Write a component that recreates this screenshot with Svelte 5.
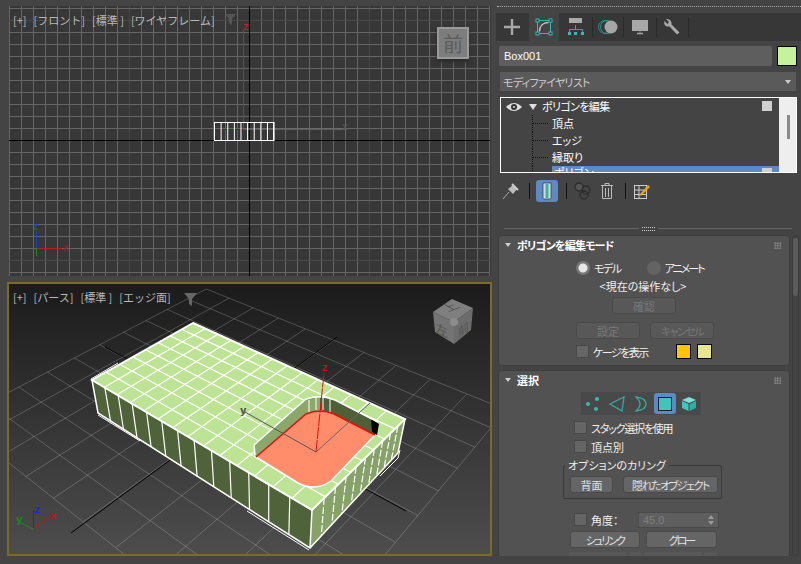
<script>
  const quad = (p) => {
    const [[x0,y0],[x1,y1],[x2,y2],[x3,y3]] = p;
    const dx1=x1-x2, dx2=x3-x2, sx=x0-x1+x2-x3, dy1=y1-y2, dy2=y3-y2, sy=y0-y1+y2-y3;
    const d=dx1*dy2-dx2*dy1;
    const g=(sx*dy2-dx2*sy)/d, h=(dx1*sy-sx*dy1)/d;
    const a=x1-x0+g*x1, b=x3-x0+h*x3, e=y1-y0+g*y1, f=y3-y0+h*y3;
    return (u,v)=>{const w=g*u+h*v+1;return [(a*u+b*v+x0)/w,(e*u+f*v+y0)/w];};
  };
  const seg = (m,a,b,c,d) => { const p=m(a,b), q=m(c,d); return {x1:p[0],y1:p[1],x2:q[0],y2:q[1]}; };
  const range = (n) => Array.from({length:n},(_,i)=>i);

  const B=[193,323], R=[405,419], F=[312,510], L=[92,380];
  const RB=[398,453], FB=[310,548], LB=[98,413];
  const pts = (a) => a.map(p=>p.join(',')).join(' ');
  const top = quad([B,R,F,L]);
  const topGrid = [
    ...range(13).map(i=>seg(top,(i+1)/14,0,(i+1)/14,1)),
    ...range(7).map(i=>seg(top,0,(i+1)/8,1,(i+1)/8))
  ];
  const lf = quad([L,F,FB,LB]);
  const leftLines = range(12).map(i=>seg(lf,(i+1)/13,0,(i+1)/13,1));
  const rf = quad([F,R,RB,FB]);
  const rightLines = range(9).map(i=>seg(rf,(i+1)/10,0,(i+1)/10,1));

  const VA=[-640,-52], VB=[916,-82], O=[230.6,415], k=0.0177;
  const floorP=(u,v)=>{const w=k*u+k*v+1;return [(k*u*VA[0]+k*v*VB[0]+O[0])/w,(k*u*VA[1]+k*v*VB[1]+O[1])/w];};
  const floor=[];
  for(let i=-10;i<=10;i+=2){
    floor.push(seg(floorP,i,-10,i,10));
    floor.push(seg(floorP,-10,i,10,i));
  }

  const vx = range(41).map(i=>9+12*i);
  const hy = range(23).map(i=>8+12*i);
  const boxX = range(10).map(i=>214+i*6.62);
  const tabSeps=[592,623,656,688];
</script>

<div class="root">
  <div class="views">
    <section class="vp front">
      <svg class="canvas" viewBox="9 6 482 270" width="482" height="270">
        {#each vx as x}<line x1={x+.5} y1="6" x2={x+.5} y2="276" class={x===369||x===129?'maj':'gl'}/>{/each}
        {#each hy as y}<line x1="9" y1={y+.5} x2="490" y2={y+.5} class={y===20||y===260?'maj':'gl'}/>{/each}
        <line x1="249.5" y1="6" x2="249.5" y2="276" class="ax"/>
        <line x1="9" y1="140.5" x2="490" y2="140.5" class="ax"/>
        <line x1="243.5" y1="129" x2="345" y2="129" stroke="#6d6d6d" stroke-width="1.5"/>
        <line x1="221" y1="129.5" x2="243" y2="129.5" stroke="#6b1f1f"/>
        <line x1="243.5" y1="30" x2="243.5" y2="128" stroke="#b02c2c"/>
        <rect x="214.5" y="122.5" width="59" height="18" fill="none" stroke="#fff"/>
        {#each boxX as x}<line x1={x+.5} y1="122" x2={x+.5} y2="141" stroke="#fff"/>{/each}
        <text x="243" y="30" class="ax-t" fill="#c22">z</text>
        <text x="342" y="130" class="ax-t" fill="#5a5a5a">x</text>
        <line x1="36.5" y1="248" x2="36.5" y2="231" stroke="#1c3fc0"/>
        <line x1="36" y1="248.5" x2="62" y2="248.5" stroke="#b02020"/>
        <line x1="36.5" y1="248" x2="36.5" y2="256" stroke="#1d8a1d"/>
        <text x="33" y="230" class="ax-t" fill="#2a4fd0">z</text>
        <text x="63" y="251" class="ax-t" fill="#a02020">x</text>
        <path d="M225 14h11l-4 5v6l-3-2v-4z" fill="#555"/>
      </svg>
      <div class="labels mono"><span>[+]</span><span>[フロント]</span><span>[標準 ]</span><span>[ワイヤフレーム]</span></div>
      <div class="cube2d"><span>前</span></div>
    </section>

    <section class="vp persp">
      <svg class="canvas" viewBox="9 284 481 270" width="481" height="270">
        <defs>
          <linearGradient id="bg" x1="0" y1="0" x2="0" y2="1">
            <stop offset="0" stop-color="#1b1b1b"/>
            <stop offset="1" stop-color="#4d4d4d"/>
          </linearGradient>
        </defs>
        <rect x="9" y="284" width="481" height="270" fill="url(#bg)"/>
        {#each floor as l}<line {...l} stroke="#fff" stroke-opacity=".2"/>{/each}
        <line x1="71" y1="533" x2="337" y2="337" stroke="#000"/>
        <line x1="105" y1="347" x2="406" y2="511" stroke="#000"/>

        <polygon points={pts([L,F,FB,LB])} fill="#4f6239"/>
        <polygon points={pts([F,R,RB,FB])} fill="#86a268"/>
        <polygon points={pts([B,R,F,L])} fill="#bde394"/>
        {#each leftLines as l}<line {...l} stroke="#fff" stroke-width="1.2"/>{/each}
        {#each rightLines as l}<line {...l} stroke="#fff" stroke-width="1.2" stroke-dasharray="7 2"/>{/each}
        {#each topGrid as l}<line {...l} stroke="#fff" stroke-width="1.2"/>{/each}

        <path d="M253 445L306 399L320 397L320 410L306 414L256 457Z" fill="#8ba86a"/>
        <path d="M320 397L335 400L378 423L375 435L334 414L320 410Z" fill="#4f6039"/>
        <path d="M371 419L379 424L377 435L372 432Z" fill="#000"/>
        <path d="M309 400V412M316 398V410M323 398V410M330 399V412" stroke="#fff"/>
        <path d="M256 457L306 414Q320 408 334 414L375 435L331 481Q315 492 298 483Z" fill="#ff8c6b"/>
        <path d="M255 455L254 445L306 399Q320 394 335 400L378 422" fill="none" stroke="#fff" stroke-width="1.5"/>
        <path d="M256 457L298 483Q315 492 331 481L375 435" fill="none" stroke="#fff" stroke-width="1.5"/>
        <path d="M256 457L306 414Q320 408 334 414L375 435" fill="none" stroke="#dd1111" stroke-width="1.5"/>

        <polygon points={pts([B,R,F,L])} fill="none" stroke="#fff" stroke-width="2"/>
        <polyline points={pts([L,LB,FB,RB,R])} fill="none" stroke="#fff" stroke-width="1.5"/>
        <line x1="312" y1="510" x2="310" y2="548" stroke="#fff" stroke-width="1.5"/>
        <path d="M91 379L118 363M98 415L140 441M247 511L309 550M380 476L398 458L400 450" fill="none" stroke="#fff"/>

        <line x1="316" y1="452" x2="245" y2="412" stroke="#555"/>
        <line x1="316" y1="452" x2="370" y2="403" stroke="#666"/>
        <line x1="316" y1="452" x2="324" y2="373" stroke="#dd1111" stroke-dasharray="12 1"/>
        <text x="322" y="371" class="ax-t" fill="#dd1111">z</text>
        <text x="240" y="414" class="ax-t bold" fill="#555">y</text>

        <line x1="33.5" y1="529" x2="33.5" y2="510" stroke="#1a22c8"/>
        <line x1="33" y1="529" x2="19" y2="522" stroke="#1b8a1b"/>
        <line x1="33" y1="529" x2="52" y2="515" stroke="#c01818"/>
        <text x="34" y="513" class="ax-t bold" fill="#2028d0">z</text>
        <text x="16" y="523" class="ax-t bold" fill="#1b8a1b">y</text>
        <text x="50" y="519" class="ax-t bold" fill="#a02020">x</text>

        <path d="M184 293h13l-5 6v7l-3-2v-5z" fill="#666"/>

        <polygon points="452,299 473,308 454,322 433,312" fill="#7f7f7f"/>
        <polygon points="433,312 454,322 454,344 435,332" fill="#747474"/>
        <polygon points="454,322 473,308 471,330 454,344" fill="#6c6c6c"/>
        <circle cx="454" cy="322" r="4" fill="#8b8b8b"/>
        <text x="0" y="0" class="cube-t" transform="matrix(.9 -.35 .8 .45 448 312)">上</text>
        <text x="0" y="0" class="cube-t" transform="matrix(.85 .42 0 .9 436 332)">左</text>
        <text x="0" y="0" class="cube-t" transform="matrix(.8 -.55 0 .9 458 338)">前</text>
      </svg>
      <div class="labels mono up"><span>[+]</span><span>[パース]</span><span>[標準 ]</span><span>[エッジ面]</span></div>
    </section>
  </div>

  <aside class="side">
    <div class="grip"></div>
    <nav class="tabs">
      <div class="tab"><svg width="18" height="18" viewBox="0 0 18 18"><path d="M9 1V17M1 9H17" stroke="#a8a8a8" stroke-width="2.4"/></svg></div>
      <div class="tab on"><svg width="18" height="18" viewBox="0 0 18 18" fill="none" stroke="#3fb5b0"><rect x="2.5" y="2.5" width="13" height="13"/><path d="M4.500 13.500C4.500 8 8 4.500 13.500 4.500" stroke="#c8c8c8" stroke-width="1.500"/><rect x="1" y="1" width="3" height="3" fill="#333"/><rect x="14" y="1" width="3" height="3" fill="#333"/><rect x="1" y="14" width="3" height="3" fill="#333"/><rect x="14" y="14" width="3" height="3" fill="#333"/></svg></div>
      <div class="tab"><svg width="18" height="18" viewBox="0 0 18 18"><rect x="2" y="0" width="13" height="5" fill="#aaa"/><path d="M8.5 7V11M2.5 15V11.5H15.500V15" fill="none" stroke="#2fa5a0"/><rect x="1" y="14" width="3" height="3" fill="#3fb5b0"/><rect x="14" y="14" width="3" height="3" fill="#3fb5b0"/><rect x="7" y="14" width="3" height="3" fill="#3fb5b0"/></svg></div>
      <div class="tab"><svg width="20" height="16" viewBox="0 0 20 16"><circle cx="7" cy="8" r="6.5" fill="none" stroke="#2f8f8c"/><circle cx="9" cy="8" r="6.500" fill="none" stroke="#2f8f8c"/><circle cx="13" cy="8" r="6.500" fill="#a6a6a6"/></svg></div>
      <div class="tab"><svg width="18" height="16" viewBox="0 0 18 16"><rect x="1" y="1" width="16" height="11" fill="#a8a8a8"/><path d="M6 14.500H12" stroke="#a8a8a8" stroke-width="1.500"/><path d="M9 12V14" stroke="#777"/></svg></div>
      <div class="tab"><svg width="18" height="18" viewBox="0 0 18 18"><path d="M3 1L6 4L4.500 6L1.500 3C0.500 6 2 8.500 5 8.500L6.500 8.500L14 16.500L16.500 14.500L8.500 6.500C9 3 6.500 .5 3 1Z" fill="#a8a8a8"/></svg></div>
      {#each tabSeps as x}<i class="tsep" style:left="{x-496}px"></i>{/each}
    </nav>
    <div class="namerow">
      <div class="name">Box001</div>
      <div class="swatch"></div>
    </div>
    <div class="drop"><span>モディファイヤリスト</span><i class="tri small"></i></div>
    <div class="stack">
      <div class="rows">
        <div class="row head">
          <svg width="16" height="10" viewBox="0 0 16 10"><path d="M0 5Q8 -3 16 5Q8 13 0 5Z" fill="#ddd"/><circle cx="8" cy="5" r="3" fill="#333"/><circle cx="8" cy="5" r="1" fill="#ddd"/></svg>
          <i class="tri"></i>
          <span>ポリゴンを編集</span>
          <b class="box"></b>
        </div>
        <div class="row sub"><i class="tree"></i><span>頂点</span></div>
        <div class="row sub"><i class="tree"></i><span>エッジ</span></div>
        <div class="row sub"><i class="tree"></i><span>縁取り</span></div>
        <div class="row sub sel"><i class="tree"></i><div class="fill">ポリゴン<b class="box"></b></div></div>
      </div>
      <div class="sb"><i></i></div>
    </div>
    <div class="tools">
      <div class="ti"><svg width="18" height="18" viewBox="0 0 18 18"><path d="M1 17L7 10" stroke="#aaa"/><path d="M6 7L11 3L15 7L11 12Z" fill="#bbb"/><path d="M10 2L16 8" stroke="#ccc" stroke-width="2"/></svg></div>
      <i class="vs"></i>
      <div class="ti act"><svg width="10" height="18" viewBox="0 0 10 18"><path d="M1 1H9V16Q9 17 8 17H2Q1 17 1 16Z" fill="#d8d8d8" stroke="#333" stroke-width=".7"/><rect x="3.500" y="2" width="3" height="14" fill="#33b5ae"/></svg></div>
      <i class="vs"></i>
      <div class="ti"><svg width="18" height="18" viewBox="0 0 18 18" fill="none" stroke="#2c2c2c" stroke-width="1.300"><circle cx="5" cy="5" r="4" fill="#555"/><circle cx="12" cy="8" r="4"/><circle cx="10" cy="13" r="4"/></svg></div>
      <div class="ti"><svg width="14" height="18" viewBox="0 0 14 18" fill="none" stroke="#bbb"><path d="M1 3.500H13M5 3V1.500H9V3"/><path d="M2.500 4V16.500H11.500V4M5.500 6V15M8.500 6V15"/></svg></div>
      <i class="vs"></i>
      <div class="ti"><svg width="18" height="18" viewBox="0 0 18 18"><rect x="1.500" y="3.500" width="12" height="13" fill="#444" stroke="#ccc"/><path d="M1.500 8H13.500M1.500 12.500H13.500M6 3.500V16.500" stroke="#ccc"/><path d="M7 12L15 3L17 5L9 13L6.500 14Z" fill="#eda20e"/></svg></div>
    </div>
    <div class="divider"><i></i><b></b><i></i></div>

    <div class="rollarea">
      <div class="rolls">
        <section class="roll r1">
          <header><i class="tri small"></i><strong class="hd">ポリゴンを編集モード</strong><em></em></header>
          <div class="radios">
            <div class="lab"><i class="radio on"></i><span class="tight">モデル</span></div>
            <div class="lab"><i class="radio"></i><span class="tighter">アニメート</span></div>
          </div>
          <div class="status">&lt;現在の操作なし&gt;</div>
          <div class="btnc"><button class="btn off w63">確認</button></div>
          <div class="btnr"><button class="btn off w63">設定</button><button class="btn off w63"><span class="tight">キャンセル</span></button></div>
          <div class="cage">
            <div class="lab"><i class="check"></i><span class="tight">ケージを表示</span></div>
            <i class="sw y"></i><i class="sw g"></i>
          </div>
        </section>

        <section class="roll r2">
          <header><i class="tri small"></i><strong>選択</strong><em></em></header>
          <div class="subs">
            <div class="si"><svg width="18" height="16" viewBox="0 0 18 16" fill="#36bab3"><circle cx="4" cy="8" r="2"/><circle cx="13" cy="3" r="2"/><circle cx="12" cy="13" r="2"/></svg></div>
            <div class="si"><svg width="16" height="16" viewBox="0 0 16 16" fill="none" stroke="#36a8a2" stroke-width="1.300"><path d="M1 8L15 1L13 15Z"/></svg></div>
            <div class="si"><svg width="12" height="16" viewBox="0 0 12 16" fill="none" stroke="#36a8a2" stroke-width="1.300"><path d="M1 1Q11 2 11 8Q11 14 1 15Q5 11 5 8Q5 5 1 1Z"/></svg></div>
            <div class="si act"><svg width="14" height="14" viewBox="0 0 14 14"><rect x=".5" y=".5" width="13" height="13" fill="#40c5be" stroke="#222"/></svg></div>
            <div class="si"><svg width="16" height="16" viewBox="0 0 16 16"><path d="M8 1L15 4L8 7L1 4Z" fill="#7fe0da"/><path d="M1 5L7.500 8V15L1 12Z" fill="#40c5be"/><path d="M15 5L8.500 8V15L15 12Z" fill="#34aaa4"/></svg></div>
          </div>
          <div class="lab ck first"><i class="check"></i><span class="snug">スタック選択を使用</span></div>
          <div class="lab ck second"><i class="check"></i>頂点別</div>
          <div class="group">
            <span class="legend">オプションのカリング</span>
            <button class="btn w42">背面</button>
            <button class="btn w95"><span class="tight">隠れたオブジェクト</span></button>
          </div>
          <div class="angle">
            <div class="lab"><i class="check"></i>角度：</div>
            <div class="spin"><span>45.0</span><svg width="6" height="10" viewBox="0 0 6 10" fill="#999"><path d="M3 0L6 4H0ZM3 10L0 6H6Z"/></svg></div>
          </div>
          <div class="shr">
            <button class="btn w70"><span class="tighter">シュリンク</span></button>
            <button class="btn w71"><span class="tighter">グロー</span></button>
          </div>
          <div class="nextr"><i></i><i class="s"></i><i></i><i class="s"></i></div>
        </section>
      </div>
      <div class="vbar"><i></i></div>
    </div>
  </aside>
  <div class="foot"></div>
</div>

<style>
  :global(body){margin:0;background:#444;}
  .root{position:relative;width:801px;height:564px;overflow:hidden;background:#444;display:flex;font-family:"Noto Sans CJK JP","Noto Sans",sans-serif;font-size:11px;color:#eee;font-feature-settings:"palt";}
  .views{width:497px;flex:none;padding:6px 0 0 7px;box-sizing:border-box;}
  .vp{position:relative;overflow:hidden;}
  .front{width:482px;height:270px;margin-left:2px;background:#373737;}
  .persp{width:481px;height:270px;margin-top:6px;border:2px solid #7d6a2b;background:#222;}
  .canvas{display:block;}
  .gl{stroke:#666;}
  .maj{stroke:#484848;}
  .ax{stroke:#000;}
  .ax-t{font:10px "DejaVu Sans",sans-serif;}
  .bold{font-weight:700;}
  .cube-t{font-size:14px;fill:#555;}
  .labels{position:absolute;left:4px;top:6px;display:flex;gap:7px;color:#b9b9b9;line-height:16px;white-space:pre;font-feature-settings:normal;}
  .labels.up{top:5px;}
  .cube2d{position:absolute;left:428px;top:21px;width:28px;height:28px;border:2px solid #9a9a9a;background:#7d7d7d;box-shadow:0 3px 3px #2a2a2a;display:flex;align-items:center;justify-content:center;font-size:20px;color:#5c5c5c;}

  .tight{letter-spacing:-1.5px;}
  .tighter{letter-spacing:-2px;}
  .snug{letter-spacing:-1.2px;}

  .side{width:304px;flex:none;}
  .grip{height:13px;box-sizing:border-box;padding-top:6px;}
  .grip::before{content:"";display:block;border-top:1px dotted #aaa;}
  .tabs{position:relative;display:flex;height:28px;background:#373737;margin-left:-1px;}
  .tab{width:32px;display:flex;align-items:center;justify-content:center;}
  .tab.on{background:#444;width:30px;margin:0 1px;}
  .tsep{position:absolute;top:4px;bottom:4px;width:1px;background:#2a2a2a;}
  .namerow{display:flex;gap:5px;margin:5px 0 0 2px;height:20px;}
  .name{width:273px;background:#5e5e5e;border-radius:2px;padding-left:5px;box-sizing:border-box;line-height:20px;color:#fff;font-family:"Liberation Sans",sans-serif;font-size:11px;}
  .swatch{width:20px;height:20px;box-sizing:border-box;background:#c6f29b;border:1px solid #000;}
  .drop{margin:6px 5px 0 3px;height:19px;background:#5a5a5a;display:flex;align-items:center;justify-content:space-between;padding:0 5px 0 3px;color:#ccc;font-size:11px;letter-spacing:-.7px;}
  .tri{width:0;height:0;border:4px solid transparent;border-top:6px solid #ddd;border-bottom:0;display:block;}
  .tri.small{border-width:4px 3.500px 0;border-top-color:#ccc;border-left-color:transparent;border-right-color:transparent;}
  .stack{margin:6px 4px 0 3px;height:76px;box-sizing:border-box;border:1px solid #fff;display:flex;overflow:hidden;}
  .rows{flex:1;background:#444;}
  .sb{width:17px;background:#eee;padding-left:8px;box-sizing:border-box;}
  .sb i{display:block;width:3px;height:24px;margin-top:17px;background:#8a8a8a;}
  .row{height:17px;display:flex;align-items:center;color:#fff;font-size:11px;}
  .row span{margin-top:-2px;}
  .head{padding-left:5px;position:relative;}
  .head span{letter-spacing:-.6px;}
  .head .tri{margin:0 5px 0 7px;}
  .box{width:10px;height:10px;background:#d0d0d0;display:block;}
  .head .box{position:absolute;left:261px;top:3px;}
  .sub{padding-left:31px;}
  .tree{width:20px;height:17px;border-left:1px dotted #111;box-sizing:border-box;position:relative;display:block;flex:none;}
  .tree::after{content:"";position:absolute;left:0;width:15px;top:8px;border-top:1px dotted #111;}
  .sel .fill{flex:1;background:#5d8ac5;height:17px;line-height:13px;padding-left:2px;position:relative;}
  .sel .box{position:absolute;right:7px;top:2px;}
  .tools{display:flex;align-items:center;height:22px;margin:7px 0 0 5px;}
  .ti{width:18px;height:22px;display:flex;align-items:center;justify-content:center;flex:none;}
  .ti.act{width:22px;border-radius:3px;background:#5d8ac5;}
  .vs{width:1px;height:16px;background:#111;margin:0 6px 0 9px;flex:none;}
  .tools .vs:nth-child(4){margin:0 7px 0 8px;}
  .tools .ti:nth-child(6){margin-left:6px;}
  .tools .vs:nth-child(7){margin:0 7px 0 9px;}
  .divider{display:flex;align-items:center;gap:3px;margin:25px 9px 0 7px;height:3px;}
  .divider i{flex:1;height:1px;background:#666;}
  .divider b{width:13px;height:2px;border-top:1px dotted #ccc;border-bottom:1px dotted #ccc;box-sizing:content-box;}
  .rollarea{display:flex;margin-top:5px;gap:2px;height:321px;margin-left:1px;overflow:hidden;}
  .rolls{width:292px;flex:none;display:flex;flex-direction:column;gap:4px;}
  .roll{position:relative;background:#525252;border-radius:4px;border:1px solid #3c3c3c;box-sizing:border-box;flex:none;}
  .r1{height:131px;}
  .r2{height:200px;}
  .roll header{display:flex;align-items:center;height:18px;padding:0 8px 0 6px;}
  .roll strong{font-size:11px;margin-left:6px;color:#fff;font-weight:700;flex:1;}
  .roll strong.hd{letter-spacing:-.8px;}
  .roll em{width:7px;height:7px;background-image:radial-gradient(#888 .8px,transparent 1px);background-size:2.500px 2.500px;}
  .vbar{width:7px;border:1px solid #3a3a3a;border-radius:4px;box-sizing:border-box;}
  .vbar i{display:block;height:58px;margin-top:2px;background:#5b5b5b;border-radius:3px;}

  .lab{display:inline-flex;align-items:center;gap:4px;color:#f0f0f0;white-space:nowrap;}
  .radio{width:14px;height:14px;border-radius:50%;background:#636363;display:block;box-sizing:border-box;}
  .radio.on{background:radial-gradient(circle,#e6e6e6 0 4px,#777 5px);}
  .check{width:13px;height:13px;background:#656565;border:1px solid #484848;box-sizing:border-box;display:block;flex:none;}
  .radios{display:flex;gap:26px;padding-left:77px;height:18px;align-items:center;margin-top:5px;}
  .status{text-align:center;width:100%;height:16px;line-height:18px;margin-left:-1px;}
  .btn{font:inherit;font-size:11px;color:#e2e2e2;background:#656565;border:1px solid #4a4a4a;border-radius:3px;height:17px;padding:0;box-sizing:border-box;line-height:14px;}
  .btn.off{background:#585858;color:#777;}
  .w63{width:64px;}
  .w42{width:43px;}
  .w95{width:95px;}
  .w70{width:70px;}
  .w71{width:71px;}
  .btnc{padding-left:113px;margin-top:4px;height:17px;}
  .btnr{display:flex;gap:10px;padding-left:77px;margin-top:8px;height:17px;}
  .cage{display:flex;align-items:center;padding-left:77px;margin-top:5px;height:15px;}
  .sw{width:15px;height:15px;border:1px solid #000;box-sizing:border-box;display:block;}
  .sw.y{background:#ffc600;margin-left:28px;}
  .sw.g{background:#e6e596;margin-left:6px;}
  .subs{display:flex;margin:3px 0 0 82px;width:120px;height:23px;background:#494949;}
  .si{width:24px;display:flex;align-items:center;justify-content:center;}
  .si.act{width:22px;height:21px;margin:1px;border-radius:3px;background:#5d8ac5;}
  .ck{display:flex;padding-left:75px;height:13px;}
  .first{margin-top:6px;}
  .second{margin-top:6px;}
  .group{margin:12px 0 0 64px;width:159px;height:34px;border:1px solid #393939;border-radius:2px;box-sizing:border-box;padding:10px 0 0 6px;display:flex;gap:10px;position:relative;}
  .legend{position:absolute;left:1px;top:-7px;background:#525252;padding:0 3px;line-height:13px;color:#eee;}
  .angle{display:flex;align-items:center;padding-left:75px;margin-top:12px;height:17px;}
  .angle .lab{width:64px;}
  .spin{width:81px;height:16px;background:#5e5e5e;border:1px solid #4a4a4a;box-sizing:border-box;display:flex;align-items:center;justify-content:space-between;padding:0 4px;color:#7e7e7e;font-family:"Liberation Sans",sans-serif;}
  .shr{display:flex;gap:6px;padding-left:71px;margin-top:3px;}
  .nextr{display:flex;gap:2px;padding-left:70px;margin-top:4px;}
  .nextr i{display:block;width:58px;height:6px;background:#585858;border-radius:2px;}
  .nextr i.s{width:13px;}
  .foot{position:absolute;left:0;right:0;bottom:0;height:8px;background:#444;}
</style>
